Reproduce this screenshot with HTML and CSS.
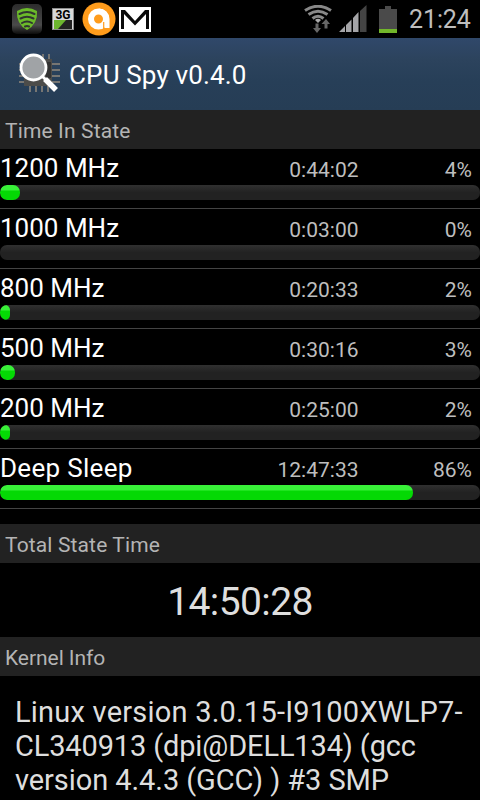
FILE: index.html
```html
<!DOCTYPE html>
<html lang="en">
<head>
    <meta charset="UTF-8">
    <meta name="viewport" content="width=device-width, initial-scale=1.0">
    <title>CPU Spy</title>
    <link rel="stylesheet" href="styles.css">
</head>
<body>
    <div class="status-bar">
        <div class="notifications">
            <svg width="30" height="32" viewBox="0 0 30 32">
                <defs>
                    <linearGradient id="tile" x1="0" y1="0" x2="0" y2="1">
                        <stop offset="0" stop-color="#2c2c2c"/>
                        <stop offset=".7" stop-color="#4a4a4a"/>
                        <stop offset="1" stop-color="#0c0c0c"/>
                    </linearGradient>
                </defs>
                <rect y="1" width="30" height="30" rx="5" fill="url(#tile)"/>
                <path d="M5 8Q15 2 25 8Q26 21 15 27Q4 21 5 8Z" fill="#6cbb2a"/>
                <g fill="none" stroke="#303530" stroke-width="2" stroke-linecap="round">
                    <path d="M7.500 11Q15 7 22.500 11"/>
                    <path d="M8.500 15.500Q15 12 21.500 15.500"/>
                    <path d="M10 20Q15 17 20 20"/>
                    <path d="M13 23.500Q15 22.500 17 23.500"/>
                </g>
            </svg>
            <svg class="icon-3g" width="22" height="23" viewBox="0 0 22 23">
                <rect x=".5" y=".5" width="21" height="21" fill="#d8d8d8" stroke="#8c8c8c"/>
                <rect x="2" y="12" width="18" height="9" fill="#222"/>
                <path d="M2 12H14L6 21H2Z" fill="#6cb52e"/>
                <text x="11" y="10.500" class="label-3g">3G</text>
            </svg>
            <svg class="icon-avast" width="34" height="34" viewBox="0 0 34 34">
                <circle cx="17" cy="17" r="16.500" fill="#ff9c1c"/>
                <path d="M17 6.500A10.500 10.500 0 0 1 27.500 17V26H22.500V17A5.500 5.500 0 0 0 17 11.500Z" fill="#fff"/>
                <circle cx="16.500" cy="17" r="7.500" fill="none" stroke="#fff" stroke-width="6"/>
                <path d="M21.700 20V28" stroke="#ff9c1c" stroke-width="1.200"/>
            </svg>
            <svg class="icon-mail" width="32" height="25" viewBox="0 0 32 25">
                <rect width="32" height="25" fill="#fff"/>
                <path d="M2 3H6L16 14L26 3H30V22H27V7L16 18.500L5 7V22H2Z" fill="#0a0a0a"/>
            </svg>
        </div>
        <div class="system">
            <svg width="28" height="28" viewBox="0 0 28 28">
                <g fill="none" stroke="#888" stroke-width="3">
                    <path d="M1 5.500Q14 -3 27 5.500"/>
                    <path d="M4.500 9.500Q14 3 23.500 9.500"/>
                    <path d="M8.500 13.500Q14 9 19.500 13.500"/>
                </g>
                <path d="M11 15Q14 12.500 17 15L14 18Z" fill="#aaa"/>
                <path d="M11.500 18.500H14.500V23H17L13 28L9 23H11.500ZM20.500 23.500V19H17.500L22 14L26 19H23.500V23.500Z" fill="#666"/>
            </svg>
            <svg class="icon-signal" width="28" height="28" viewBox="0 0 28 28">
                <path d="M0 27L6 21V27ZM7 20L12.500 14.500V27H7ZM14 13L19.500 7V27H14Z" fill="#a5a5a8"/>
                <path d="M21 6L27.500 0V27H21Z" fill="#444"/>
            </svg>
            <svg class="icon-battery" width="18" height="27" viewBox="0 0 18 27">
                <path d="M6 0H12V3H18V23H0V3H6Z" fill="#4a4a4a"/>
                <rect y="23" width="18" height="4" fill="#72b62b"/>
            </svg>
            <span class="clock">21:24</span>
        </div>
    </div>

    <div class="action-bar">
        <svg class="app-icon" width="42" height="42" viewBox="0 0 42 42">
            <path d="M12 1V8M18 1V8M24 1V8M30 1V8M11 32V39M17 32V39M23 32V39M29 32V39M33 11H41M33 17H41M33 23H41M33 29H41M0 11H8M0 17H8M0 23H8M0 29H8" stroke="#777673" stroke-width="2"/>
            <rect x="5" y="6" width="28" height="27" fill="#4c4c4a"/>
            <rect x="27" y="9" width="5" height="16" fill="#333"/>
            <path d="M23 23L27 27" stroke="#fff" stroke-width="3"/>
            <path d="M26 26L37 37" stroke="#fff" stroke-width="5.500"/>
            <circle cx="14.500" cy="14.500" r="12.500" fill="#a0a3a6" stroke="#fff" stroke-width="2.800"/>
        </svg>
        <span class="title">CPU Spy v0.4.0</span>
    </div>

    <div class="section-head">Time In State</div>
    <div class="states">
        <div class="state">
            <div class="state-text"><span class="freq">1200 MHz</span><span class="time">0:44:02</span><span class="percent">4%</span></div>
            <div class="bar"><div class="fill" style="width: 20px"></div></div>
        </div>
        <div class="state">
            <div class="state-text"><span class="freq">1000 MHz</span><span class="time">0:03:00</span><span class="percent">0%</span></div>
            <div class="bar"><div class="fill" style="width: 0"></div></div>
        </div>
        <div class="state">
            <div class="state-text"><span class="freq">800 MHz</span><span class="time">0:20:33</span><span class="percent">2%</span></div>
            <div class="bar"><div class="fill" style="width: 10px"></div></div>
        </div>
        <div class="state">
            <div class="state-text"><span class="freq">500 MHz</span><span class="time">0:30:16</span><span class="percent">3%</span></div>
            <div class="bar"><div class="fill" style="width: 15px"></div></div>
        </div>
        <div class="state">
            <div class="state-text"><span class="freq">200 MHz</span><span class="time">0:25:00</span><span class="percent">2%</span></div>
            <div class="bar"><div class="fill" style="width: 10px"></div></div>
        </div>
        <div class="state">
            <div class="state-text"><span class="freq deep">Deep Sleep</span><span class="time">12:47:33</span><span class="percent">86%</span></div>
            <div class="bar"><div class="fill" style="width: 413px"></div></div>
        </div>
    </div>

    <div class="section-head total-head">Total State Time</div>
    <div class="total">14:50:28</div>

    <div class="section-head kernel-head">Kernel Info</div>
    <div class="kernel">
        <div class="line-1">Linux version 3.0.15-I9100XWLP7-</div>
        <div class="line-2">CL340913 (dpi@DELL134) (gcc</div>
        <div class="line-3">version 4.4.3 (GCC) ) #3 SMP</div>
    </div>
</body>
</html>
```
FILE: styles.css
```css
*{
    box-sizing: border-box;
    padding: 0;
    margin: 0;
}
body{
    height: 800px;
    overflow: hidden;
    background: #000;
    color: #fff;
    font-family: Roboto, sans-serif;
}
svg{
    display: block;
    flex: none;
}
.status-bar{
    display: flex;
    justify-content: space-between;
    height: 38px;
    padding: 0 9px 0 12px;
}
.notifications,
.system{
    display: flex;
    align-items: center;
}
.icon-3g{
    margin-left: 10px;
}
.label-3g{
    font-size: 12px;
    font-weight: bold;
    text-anchor: middle;
    fill: #000;
}
.icon-avast{
    margin-left: 8px;
}
.icon-mail{
    margin-left: 3px;
}
.icon-signal{
    margin-left: 7px;
}
.icon-battery{
    margin-left: 12px;
}
.clock{
    width: 63px;
    margin-left: 11px;
    padding: 1px 0 0 1px;
    color: #bebebe;
    font-size: 25px;
    letter-spacing: -0.1px;
}
.action-bar{
    display: flex;
    align-items: center;
    height: 72px;
    padding-left: 19px;
    background: linear-gradient(#30486a, #2c435d 30%, #273f58 60%, #263d55);
}
.title{
    margin-left: 8px;
    padding-top: 2px;
    font-size: 26px;
    letter-spacing: 0.15px;
}
.section-head{
    height: 39px;
    padding-left: 5px;
    background: #222;
    color: #b4b4b4;
    font-size: 21px;
    line-height: 42px;
    letter-spacing: 0.14px;
}
.state{
    height: 60px;
    border-bottom: 1px solid #444;
}
.state-text{
    display: flex;
    align-items: baseline;
    height: 36px;
    line-height: 38px;
}
.freq{
    width: 200px;
    font-size: 26px;
}
.deep{
    letter-spacing: 0.3px;
}
.time{
    width: 158.5px;
    color: #bebebe;
    font-size: 21px;
    text-align: right;
}
.percent{
    width: 113.5px;
    color: #bebebe;
    font-size: 21px;
    text-align: right;
}
.bar{
    height: 15px;
    border-radius: 7px;
    overflow: hidden;
    background: linear-gradient(#303030, #222 50%);
}
.fill{
    height: 15px;
    border-radius: 7px;
    background: linear-gradient(#38f038 5px, #04d904 6px);
}
.total-head{
    margin-top: 15px;
}
.total{
    height: 74px;
    color: #dedede;
    font-size: 39px;
    line-height: 78px;
    letter-spacing: -0.6px;
    text-align: center;
}
.kernel-head{
    letter-spacing: -0.05px;
}
.kernel{
    padding: 19px 15px 0;
    color: #dedede;
    font-size: 29px;
    line-height: 34px;
    white-space: nowrap;
}
.line-1{
    letter-spacing: 0.22px;
}
.line-2{
    letter-spacing: -0.14px;
}
.line-3{
    letter-spacing: -0.07px;
}
```
